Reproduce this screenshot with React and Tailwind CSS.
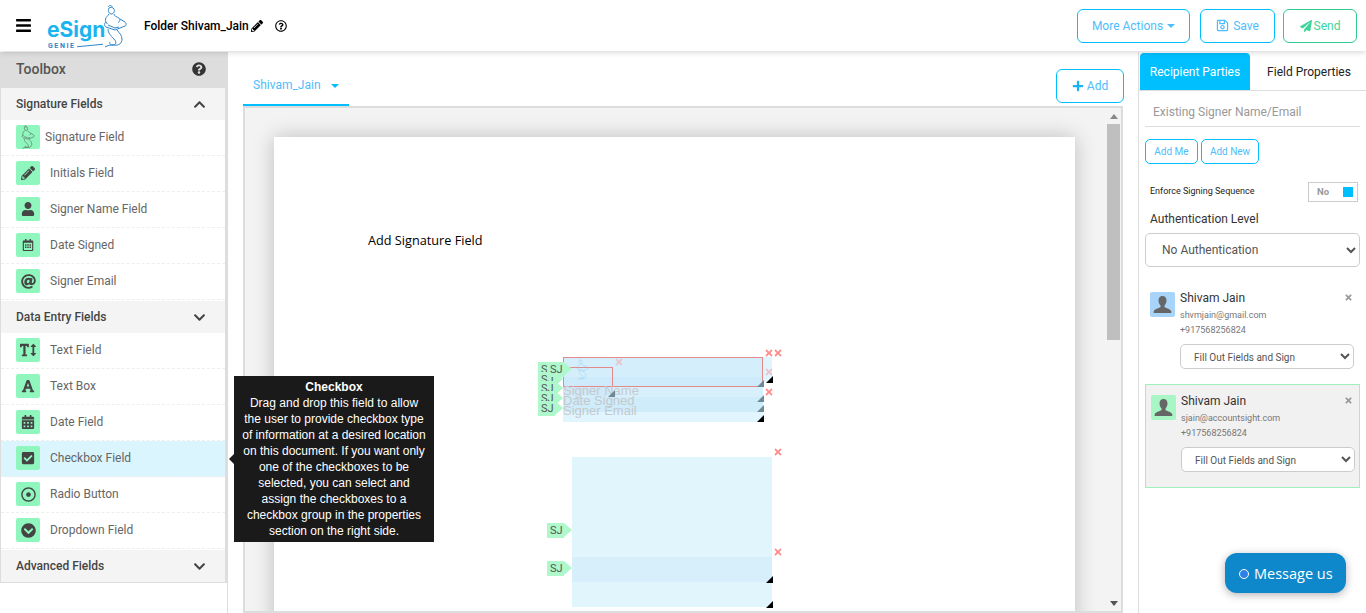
import {
  FaAt,
  FaBars,
  FaCalendarAlt,
  FaCheckSquare,
  FaChevronCircleDown,
  FaChevronDown,
  FaChevronUp,
  FaFont,
  FaPaperPlane,
  FaPencilAlt,
  FaPlus,
  FaQuestionCircle,
  FaRegCalendarAlt,
  FaRegDotCircle,
  FaRegQuestionCircle,
  FaRegSave,
  FaTextHeight,
  FaTimes,
  FaUser,
} from "react-icons/fa"

const GenieMark = ({ className, stroke = "#2f86c9" }) => (
  <svg viewBox="0 0 24 44" fill="none" stroke={stroke} strokeWidth="1" className={className}>
    <path d="M5 3c1-2 4-2 4 0" />
    <path d="M6 4c-1 2-1 5 2 6 3 0 4-3 3-5s-4-2-5-1z" />
    <path d="M6 10c-1 2-3 3-3.500 5-.5 2 1 4 2 5" />
    <path d="M11 10c0 2 3 3 5 4 2 2 0 4-1 5" />
    <path d="M3 18c-2 1-2 4 0 5l9 3 10-4c2-1 1-3 0-4l-5-3" />
    <path d="M5 21l7 3 4-1" />
    <path d="M5 25c0 4 3 7 6 10s2 6-1 6-4-2-3-3" />
    <path d="M14 26c2 3 5 5 5 9s-3 7-8 6c-3 0-6 0-9 2" />
  </svg>
)

const Silhouette = () => (
  <svg viewBox="0 0 25 25" className="w-[25px] h-[25px]" fill="#666">
    <path d="M12.5 4c2.6 0 4 2 4 4.6 0 2-.9 3.9-2 5v1.7c2 .9 6.5 2 6.8 4.2V21H3.700v-1.500c.3-2.200 4.800-3.300 6.800-4.200v-1.700c-1.100-1.100-2-3-2-5C8.500 6 9.900 4 12.500 4z" />
  </svg>
)

const Caret = ({ className = "" }) => (
  <span className={`inline-block w-0 h-0 border-x-[4px] border-x-transparent border-t-[4px] border-t-current ${className}`}></span>
)

const Logo = () => (
  <div className="flex items-start ml-[15px] h-[46px]">
    <div className="w-[56px] flex flex-col pt-[15px]">
      <span className="text-[21px] leading-[24px] font-bold text-[#1ab4f0] font-['Inter',sans-serif]">eSign</span>
      <div className="flex items-center mt-[1px]">
        <span className="text-[7px] leading-[6px] font-bold tracking-[1.6px] text-[#2f86c9] pl-[1px]">GENIE</span>
        <span className="h-[1px] w-[26px] bg-[#2f86c9] ml-[1px] -rotate-6"></span>
      </div>
    </div>
    <GenieMark className="w-[24px] h-[44px] mt-[1px]" />
  </div>
)

const signatureFields = [
  { label: "Initials Field", icon: <FaPencilAlt className="text-[14px]" /> },
  { label: "Signer Name Field", icon: <FaUser className="text-[14px]" /> },
  { label: "Date Signed", icon: <FaRegCalendarAlt className="text-[12px]" /> },
  { label: "Signer Email", icon: <FaAt className="text-[15px]" /> },
]

const dataFields = [
  { label: "Text Field", icon: <FaTextHeight className="text-[16px]" /> },
  { label: "Text Box", icon: <FaFont className="text-[14px]" /> },
  { label: "Date Field", icon: <FaCalendarAlt className="text-[14px]" /> },
  { label: "Checkbox Field", icon: <FaCheckSquare className="text-[14px]" />, active: true },
  { label: "Radio Button", icon: <FaRegDotCircle className="text-[15px]" /> },
  { label: "Dropdown Field", icon: <FaChevronCircleDown className="text-[15px]" /> },
]

const Tile = ({ children }) => (
  <div className="w-6 h-6 shrink-0 rounded-[2px] bg-[#8ff7bd] text-[#444] flex items-center justify-center overflow-hidden">
    {children}
  </div>
)

const FieldRow = ({ label, icon, active }) => (
  <div className={`h-9 flex items-center gap-[10px] pl-[15px] pb-px border-b border-dashed border-[#eee] ${active ? "bg-[#dbf5fe]" : ""}`}>
    <Tile>{icon}</Tile>
    <span className="text-xs text-[#666]">{label}</span>
  </div>
)

const SectionHead = ({ title, open }) => (
  <div className="h-8 flex items-center justify-between pl-[15px] pr-[19px] bg-[#f4f4f4]">
    <span className="text-xs font-medium text-[#444]">{title}</span>
    {open ? <FaChevronUp className="text-[13px] text-[#444]" /> : <FaChevronDown className="text-[13px] text-[#444]" />}
  </div>
)

const Toolbox = () => (
  <aside className="w-[228px] shrink-0 border-r border-[#ddd]">
    <div className="h-9 bg-[#ddd] flex items-center justify-between pl-4 pr-[21px] pb-[2px]">
      <span className="text-sm font-medium text-[#555]">Toolbox</span>
      <FaQuestionCircle className="text-[14px] text-[#333]" />
    </div>
    <div className="w-[227px] border-l border-r-2 border-b border-[#ddd]">
      <SectionHead title="Signature Fields" open />
      <div className="h-9 flex items-center gap-[5px] pl-[15px] pb-px border-b border-dashed border-[#eee]">
        <Tile><GenieMark className="w-[16px] h-[24px]" stroke="#555" /></Tile>
        <span className="text-xs text-[#666]">Signature Field</span>
      </div>
      {signatureFields.map((f) => <FieldRow key={f.label} {...f} />)}
      <div className="h-px"></div>
      <SectionHead title="Data Entry Fields" />
      {dataFields.map((f) => <FieldRow key={f.label} {...f} />)}
      <div className="h-px"></div>
      <SectionHead title="Advanced Fields" />
    </div>
  </aside>
)

const Tag = ({ x, y }) => (
  <div className="absolute flex h-[15px]" style={{ left: x - 274, top: y - 137 }}>
    <span className="w-[17px] bg-[#aef8cc] text-[11px] leading-[15px] pl-[3px] text-[#555]">SJ</span>
    <span className="w-0 h-0 border-y-[7.5px] border-y-transparent border-l-[8px] border-l-[#aef8cc]"></span>
  </div>
)

const Box = ({ x, y, w, h, className = "" }) => (
  <div className={`absolute ${className}`} style={{ left: x - 274, top: y - 137, width: w, height: h }}></div>
)

const Corner = ({ x, y, dim }) => (
  <div
    className={`absolute w-0 h-0 border-l-[7px] border-l-transparent border-b-[7px] ${dim ? "border-b-[#6f8a96]" : "border-b-black"}`}
    style={{ left: x - 274, top: y - 137 }}
  ></div>
)

const Cross = ({ x, y, dim }) => (
  <FaTimes
    className={`absolute text-[10px] ${dim ? "text-[#e8c4cc]" : "text-[#ff8a8a]"}`}
    style={{ left: x - 279, top: y - 142 }}
  />
)

const FieldText = ({ y, children }) => (
  <span
    className="absolute text-[13px] leading-[14px] text-[#c4c9cc] font-['Liberation_Sans',sans-serif] whitespace-nowrap"
    style={{ left: 563 - 274, top: y - 144 }}
  >
    {children}
  </span>
)

const DocumentPage = () => (
  <div className="relative w-[801px] h-[1000px] bg-white mt-[29px] ml-[29px] shadow-[0_0_20px_rgba(0,0,0,0.22)]">
    <p className="absolute left-[94px] top-[94px] text-[12.7px] leading-[18px] text-black font-['Open_Sans',sans-serif]">Add Signature Field</p>

    {/* upper stack of placed fields */}
    <Box x={572} y={357} w={200} h={25} className="bg-[#e1f5fe]" />
    <Box x={563} y={357} w={200} h={20} className="bg-[#d4eefc]" />
    <Box x={563} y={377} w={200} h={10} className="bg-[#cdebfb]" />
    <Box x={563} y={387} w={200} h={10} className="bg-[#d8f0fc]" />
    <Box x={563} y={397} w={200} h={15} className="bg-[#cfecfb]" />
    <Box x={563} y={412} w={200} h={10} className="bg-[#e1f5fe]" />
    <Box x={563} y={387} w={50} h={9} className="bg-[#cfe9f8]" />
    <Box x={563} y={367} w={50} h={20} className="border-t border-r border-[#e58a8a]" />
    <Box x={563} y={357} w={200} h={30} className="border border-[#e58a8a]" />
    <GenieMark className="absolute w-[13px] h-[21px] left-[302px] top-[222px] opacity-70" stroke="#7cc4f0" />
    <FieldText y={391}>Signer Name</FieldText>
    <FieldText y={401}>Date Signed</FieldText>
    <FieldText y={411}>Signer Email</FieldText>
    <Corner x={766} y={376} />
    <Corner x={757} y={380} dim />
    <Corner x={757} y={395} dim />
    <Corner x={757} y={405} dim />
    <Corner x={757} y={415} />
    <Corner x={608} y={390} dim />
    <Cross x={769} y={353} />
    <Cross x={778} y={353} />
    <Cross x={619} y={362} dim />
    <Cross x={769} y={372} dim />
    <Cross x={769} y={392} />
    <Tag x={538} y={362} />
    <Tag x={538} y={372} />
    <Tag x={538} y={381} />
    <Tag x={538} y={391} />
    <Tag x={538} y={401} />
    <Tag x={547} y={362} />

    {/* lower fields */}
    <Box x={572} y={457} w={200} h={100} className="bg-[#e1f5fd]" />
    <Box x={572} y={557} w={200} h={25} className="bg-[#d7eefb]" />
    <Box x={572} y={582} w={200} h={25} className="bg-[#e1f5fd]" />
    <Corner x={766} y={576} />
    <Corner x={766} y={601} />
    <Cross x={778} y={452} />
    <Cross x={778} y={552} />
    <Tag x={547} y={523} />
    <Tag x={547} y={561} />
  </div>
)

const DocumentArea = () => (
  <main className="flex-1 min-w-0 pl-[15px] pr-[15px] flex flex-col">
    <div className="h-[54px] shrink-0 flex items-end justify-between">
      <div className="w-[106px] h-[38px] border-b-[2px] border-[#00bfff] pl-[10px] flex items-start pt-[9px] gap-[10px]">
        <span className="text-xs leading-[16px] text-[#4dbdfc]">Shivam_Jain</span>
        <Caret className="text-[#00bfff] mt-[7px]" />
      </div>
      <button className="w-[68px] h-[34px] mb-[3px] -mr-[1px] flex items-center justify-center gap-[3px] rounded-md border border-[#00bfff] bg-white text-xs text-[#4dbdfc]">
        <FaPlus className="text-[12px] text-[#1ab4f0]" /> Add
      </button>
    </div>
    <div className="flex-1 min-h-0 flex border-2 border-[#ddd] bg-[#f3f3f3]">
      <div className="flex-1 min-w-0 overflow-hidden">
        <DocumentPage />
      </div>
      <div className="w-[15px] shrink-0 flex flex-col items-center">
        <div className="h-[15px] flex items-center justify-center pt-[2px]">
          <div className="w-0 h-0 border-x-[4px] border-x-transparent border-b-[5px] border-b-[#888]"></div>
        </div>
        <div className="w-[13px] h-[216px] mt-[1px] bg-[#bfbfbf]"></div>
        <div className="flex-1"></div>
        <div className="h-[15px] flex items-center justify-center">
          <div className="w-0 h-0 border-x-[4px] border-x-transparent border-t-[5px] border-t-[#555]"></div>
        </div>
      </div>
    </div>
  </main>
)

const Party = ({ name, email, phone, selected }) => (
  <div className={`relative w-[215px] ${selected ? "h-[104px] bg-[#f1f1f1] border border-[#9ef0bd] pl-[5px] pt-[9px]" : "h-[92px] pl-[4px] pt-[7px] border border-transparent"}`}>
    <div className="flex gap-[5px]">
      <div className={`w-[25px] h-[25px] mt-[1px] shrink-0 rounded-[2px] overflow-hidden ${selected ? "bg-[#a8f5c6]" : "bg-[#a8d4fa]"}`}>
        <Silhouette />
      </div>
      <div className="flex-1 min-w-0 pr-[6px]">
        <div className="text-xs leading-[14px] text-[#333]">{name}</div>
        <div className="text-[9px] leading-[15px] mt-[3px] text-[#777]">{email}</div>
        <div className="text-[9px] leading-[15px] text-[#777]">{phone}</div>
        <select className="mt-[6px] w-[174px] h-[25px] pl-[9px] pt-px text-[10px] text-[#555] bg-white border border-[#ccc] rounded-[5px]">
          <option>Fill Out Fields and Sign</option>
        </select>
      </div>
    </div>
    <FaTimes className={`absolute text-[9px] text-[#999] right-[6px] ${selected ? "top-[11px]" : "top-[9px]"}`} />
  </div>
)

const RightPanel = () => (
  <aside className="w-[228px] shrink-0 border-l border-[#ddd] font-['Roboto',sans-serif]">
    <div className="h-[39px] pt-px flex items-stretch border-b border-[#ddd]">
      <div className="w-[110px] ml-px flex items-center justify-center rounded-t-[4px] bg-[#00bfff] text-xs text-white">Recipient Parties</div>
      <div className="flex-1 flex items-center justify-center pl-[2px] text-xs text-[#222]">Field Properties</div>
    </div>
    <div className="pl-[6px] pr-[6px]">
      <div className="h-9 border-b border-[#ddd] flex items-center pl-2 pt-[6px] text-xs text-[#999]">Existing Signer Name/Email</div>
      <div className="flex gap-[3px] mt-3">
        <button className="w-[53px] h-[25px] rounded-[5px] border border-[#00bfff] text-[10px] text-[#4dbdfc]">Add Me</button>
        <button className="w-[58px] h-[25px] rounded-[5px] border border-[#00bfff] text-[10px] text-[#4dbdfc]">Add New</button>
      </div>
      <div className="flex items-center justify-between mt-[18px] pl-[5px] pr-[2px]">
        <span className="text-[9px] leading-[16px] pb-[2px] text-[#222]">Enforce Signing Sequence</span>
        <div className="w-[50px] h-5 border border-[#ccc] flex items-center justify-between pl-[8px] pr-1">
          <span className="text-[9.5px] font-bold text-[#999]">No</span>
          <span className="w-[10px] h-[10px] bg-[#00bfff]"></span>
        </div>
      </div>
      <div className="text-xs leading-[14px] text-[#333] pl-[5px] mt-[10px]">Authentication Level</div>
      <select className="mt-[7px] w-[215px] h-[34px] pl-[12px] text-xs text-[#555] bg-white border border-[#ccc] rounded-[5px]">
        <option>No Authentication</option>
      </select>
      <div className="mt-[16px] flex flex-col">
        <Party name="Shivam Jain" email="shvmjain@gmail.com" phone="+917568256824" />
        <div className="h-[9px]"></div>
        <Party name="Shivam Jain" email="sjain@accountsight.com" phone="+917568256824" selected />
      </div>
    </div>
  </aside>
)

const App = () => {
  return (
    <div className="relative w-[1366px] h-[613px] overflow-hidden bg-white font-['Roboto',sans-serif]">
      <header className="relative z-10 h-[51px] flex items-center justify-between bg-white shadow-[0_1px_6px_rgba(0,0,0,0.18)]">
        <div className="flex items-center">
          <FaBars className="ml-[15px] text-[17px] text-black" />
          <Logo />
          <span className="ml-[17px] text-xs font-medium text-black">Folder Shivam_Jain</span>
          <FaPencilAlt className="ml-[2px] text-[12px] text-black" />
          <FaRegQuestionCircle className="ml-[12px] text-[12px] text-black" />
        </div>
        <div className="flex items-center gap-[8px] pr-[9px]">
          <button className="w-[113px] h-[34px] mr-[2px] rounded-md border border-[#00bfff] text-xs text-[#4dbdfc] flex items-center justify-center gap-[4px]">
            More Actions <Caret className="mt-[1px]" />
          </button>
          <button className="w-[75px] h-[34px] rounded-md border border-[#00bfff] text-xs text-[#4dbdfc] flex items-center justify-center gap-[4px]">
            <FaRegSave className="text-[13px]" /> Save
          </button>
          <button className="w-[74px] h-[34px] rounded-md border border-[#2ecc8f] text-xs text-[#3fd49b] flex items-center justify-center gap-[2px]">
            <FaPaperPlane className="text-[12px]" /> Send
          </button>
        </div>
      </header>

      <div className="flex h-[562px] pt-px">
        <Toolbox />
        <DocumentArea />
        <RightPanel />
      </div>

      {/* tooltip for the hovered toolbox field */}
      <div className="absolute left-[234px] top-[376px] z-20 w-[200px] h-[166px] bg-[#1a1a1a] px-2 pt-[3px] text-center text-xs leading-[16px] text-white font-['Liberation_Sans',sans-serif]">
        <div className="font-bold">Checkbox</div>
        Drag and drop this field to allow the user to provide checkbox type of information at a desired location on this document. If you want only one of the checkboxes to be selected, you can select and assign the checkboxes to a checkbox group in the properties section on the right side.
        <span className="absolute -left-[5px] top-[78px] w-0 h-0 border-y-[5px] border-y-transparent border-r-[5px] border-r-[#1a1a1a]"></span>
      </div>

      <button className="absolute left-[1225px] top-[553px] z-20 w-[121px] h-10 rounded-xl bg-[#0e88cb] shadow-[0_2px_8px_rgba(0,0,0,0.3)] flex items-center gap-[5px] pl-[14px] pt-px text-[14.5px] text-white font-['Open_Sans',sans-serif]">
        <span className="w-[10px] h-[10px] rounded-full bg-[#2f7fe8] border border-white"></span>
        Message us
      </button>
    </div>
  )
}

export default App
